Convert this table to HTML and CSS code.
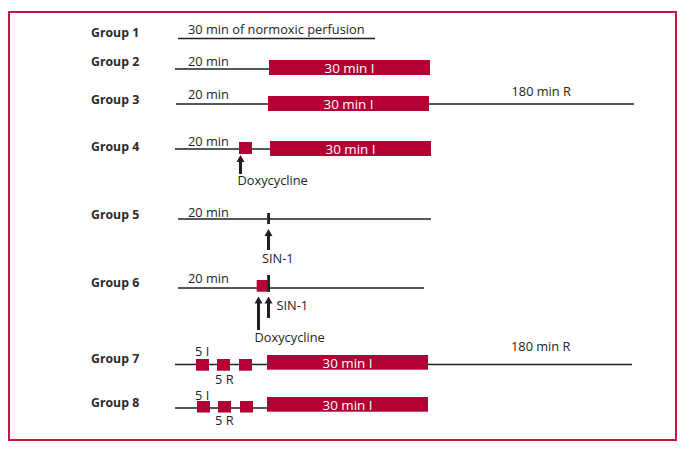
FILE: index.html
```html
<!DOCTYPE html>
<html lang="en">
<head>
<meta charset="utf-8">
<title>Perfusion protocol groups</title>
<link rel="stylesheet" href="styles.css">
</head>
<body>
<figure class="frame">
<svg class="diagram" width="665" height="426" viewBox="10 13 665 426" xmlns="http://www.w3.org/2000/svg">
  <!-- Group labels -->
  <g class="glabel">
    <text x="91" y="37">Group 1</text>
    <text x="91" y="66">Group 2</text>
    <text x="91" y="104">Group 3</text>
    <text x="91" y="151">Group 4</text>
    <text x="91" y="219">Group 5</text>
    <text x="91" y="287">Group 6</text>
    <text x="91" y="363">Group 7</text>
    <text x="91" y="407">Group 8</text>
  </g>

  <!-- Axes -->
  <g class="axis">
    <line x1="178" y1="38.5" x2="375" y2="38.5"/>
    <line x1="175" y1="69" x2="270" y2="69"/>
    <line x1="176" y1="104" x2="634" y2="104"/>
    <line x1="175" y1="149" x2="271" y2="149"/>
    <line x1="178" y1="219" x2="431" y2="219"/>
    <line x1="178" y1="288" x2="424" y2="288"/>
    <line x1="175" y1="364.5" x2="632" y2="364.5"/>
    <line x1="175" y1="408" x2="268" y2="408"/>
  </g>

  <!-- Ischaemia bars -->
  <g class="bar">
    <rect x="269" y="60" width="161" height="15"/>
    <rect x="268" y="96" width="161" height="15"/>
    <rect x="270" y="141" width="161" height="15"/>
    <rect x="267" y="355" width="161" height="14.7"/>
    <rect x="267" y="397" width="161" height="14.7"/>
  </g>
  <g class="bartext">
    <text x="349.5" y="72.5">30 min I</text>
    <text x="348.5" y="108.5">30 min I</text>
    <text x="350.5" y="153.5">30 min I</text>
    <text x="347.5" y="367.7">30 min I</text>
    <text x="347.5" y="410">30 min I</text>
  </g>

  <!-- Small squares -->
  <g class="bar">
    <rect x="239" y="142" width="13" height="12"/>
    <rect x="256.7" y="280" width="10.8" height="11.7"/>
    <rect x="196" y="359" width="13" height="11.7"/>
    <rect x="217" y="359" width="13" height="11.7"/>
    <rect x="239" y="359" width="13" height="11.7"/>
    <rect x="197" y="401" width="13" height="11.5"/>
    <rect x="218" y="401" width="13" height="11.5"/>
    <rect x="240" y="401" width="13" height="11.5"/>
  </g>

  <!-- Ticks -->
  <g class="tick">
    <rect x="267.2" y="213" width="2.8" height="11"/>
    <rect x="267.2" y="275" width="2.8" height="17"/>
  </g>

  <!-- Arrows -->
  <g class="arrow">
    <path d="M240.5 155 L244.5 162 L242 162 L242 174 L239 174 L239 162 L236.5 162 Z"/>
    <path d="M268.5 229 L272.5 236 L270 236 L270 250 L267 250 L267 236 L264.5 236 Z"/>
    <path d="M258.5 296.5 L262.5 303.5 L260 303.5 L260 330 L257 330 L257 303.5 L254.5 303.5 Z"/>
    <path d="M268.5 296.5 L272.5 303.5 L270 303.5 L270 318 L267 318 L267 303.5 L264.5 303.5 Z"/>
  </g>

  <!-- Annotations -->
  <g class="note">
    <text x="188" y="34.3">30 min of normoxic perfusion</text>
    <text x="188" y="65.7">20 min</text>
    <text x="188" y="99.3">20 min</text>
    <text x="511.5" y="96">180 min R</text>
    <text x="188" y="146">20 min</text>
    <text x="237.5" y="185">Doxycycline</text>
    <text x="188" y="216.7">20 min</text>
    <text x="262" y="263">SIN-1</text>
    <text x="188" y="283.3">20 min</text>
    <text x="276.5" y="310">SIN-1</text>
    <text x="254.5" y="342.3">Doxycycline</text>
    <text x="195" y="355.7">5 I</text>
    <text x="215" y="384">5 R</text>
    <text x="511" y="350.5">180 min R</text>
    <text x="195" y="400">5 I</text>
    <text x="215" y="425">5 R</text>
  </g>
</svg>
</figure>
</body>
</html>
```

FILE: styles.css
```css
html, body {
  margin: 0;
  padding: 0;
  background: #ffffff;
}

body {
  width: 694px;
  height: 452px;
  overflow: hidden;
  font-family: "Open Sans", "Noto Sans", "Liberation Sans", sans-serif;
}

.frame {
  margin: 11px 0 0 8px;
  padding: 0;
  width: 665px;
  height: 426px;
  border: 2px solid #c4163e;
}

.diagram {
  display: block;
}

.glabel text {
  font-family: "Open Sans", "Noto Sans", sans-serif;
  font-size: 12.3px;
  font-weight: 700;
  fill: #2b2a29;
}

.note text {
  font-family: "Open Sans", "Noto Sans", sans-serif;
  font-size: 12.8px;
  fill: #231f20;
}

.bartext text {
  font-family: "Open Sans", "Noto Sans", sans-serif;
  font-size: 13.4px;
  fill: #ffffff;
  text-anchor: middle;
}

.axis line {
  stroke: #231f20;
  stroke-width: 1.3;
}

.bar rect {
  fill: #b30034;
}

.tick rect,
.arrow path {
  fill: #231f20;
}
```
